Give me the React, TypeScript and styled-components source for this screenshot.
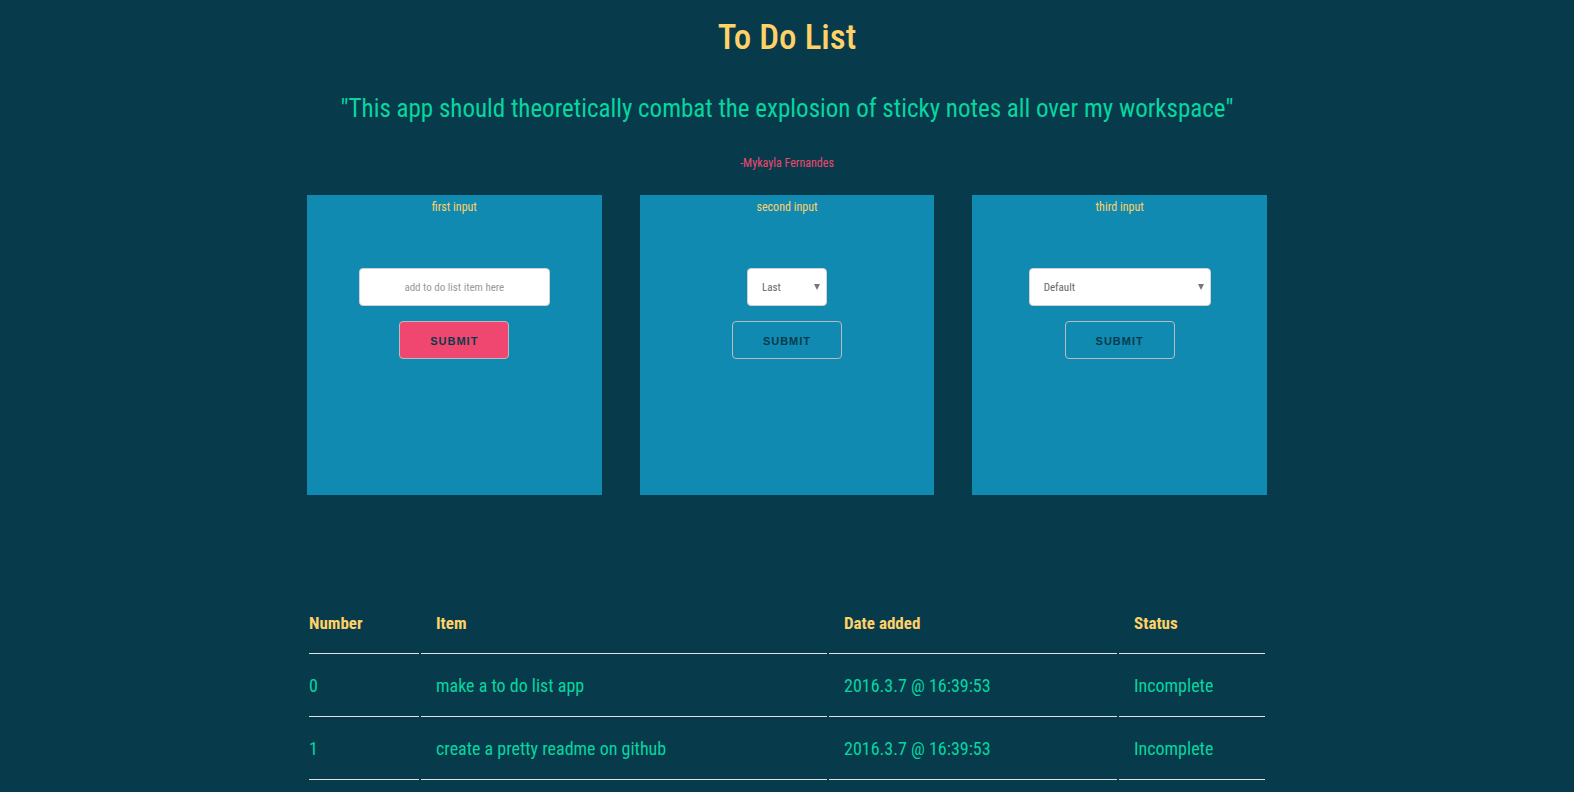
import React from 'react';
import styled, { createGlobalStyle } from 'styled-components';

const colors = {
  navy: '#073b4c',
  blue: '#118ab2',
  green: '#06d6a0',
  yellow: '#ffd166',
  pink: '#ef476f',
};

const condensed = '"Roboto Condensed", "Open Sans Condensed", "Liberation Sans", sans-serif';

const GlobalStyle = createGlobalStyle`
  *, *::before, *::after { box-sizing: border-box; }
  body {
    margin: 0;
    background: ${colors.navy};
    color: ${colors.green};
    font-family: ${condensed};
    font-size: 18px;
    line-height: 36px;
  }
`;

const Page = styled.main`
  width: 100%;
  max-width: 960px;
  margin: 0 auto;
`;

const Header = styled.header`
  display: flex;
  flex-direction: column;
  align-items: center;
  text-align: center;
`;

const Title = styled.h1`
  margin: 0;
  padding-top: 8px;
  color: ${colors.yellow};
  font-size: 35px;
  font-weight: 500;
  line-height: 60px;
`;

const Quote = styled.h2`
  margin: 0;
  padding-top: 16px;
  font-size: 25px;
  font-weight: 400;
  line-height: 50px;
`;

const Author = styled.p`
  margin: 0;
  padding: 17px 0 20px;
  color: ${colors.pink};
  font-size: 12px;
  line-height: 24px;
`;

const Cards = styled.div`
  display: grid;
  grid-template-columns: repeat(3, 1fr);
  gap: 38px;
`;

const Card = styled.form`
  display: flex;
  flex-direction: column;
  align-items: center;
  min-height: 300px;
  background: ${colors.blue};
`;

const CardLabel = styled.label`
  margin-bottom: 49px;
  color: ${colors.yellow};
  font-size: 12px;
  line-height: 24px;
`;

const TextField = styled.input`
  width: 191px;
  height: 38px;
  margin-bottom: 15px;
  padding: 6px 10px;
  border: 1px solid #d1d1d1;
  border-radius: 4px;
  background: #fff;
  color: #555;
  font-family: inherit;
  font-size: 11px;
  text-align: center;

  &::placeholder { color: #999; opacity: 1; }
`;

const SelectWrap = styled.div<{ $width: number }>`
  position: relative;
  width: ${(p) => p.$width}px;
  height: 38px;
  margin-bottom: 15px;
`;

const Select = styled.select`
  appearance: none;
  display: block;
  width: 100%;
  height: 100%;
  padding: 6px 14px;
  border: 1px solid #d1d1d1;
  border-radius: 4px;
  background: #fff;
  color: #666;
  font-family: inherit;
  font-size: 11px;
`;

const Arrow = styled.svg`
  position: absolute;
  top: 16px;
  right: 7px;
  width: 6px;
  height: 6px;
  fill: #777;
  pointer-events: none;
`;

const Submit = styled.button<{ $active?: boolean }>`
  width: 110px;
  height: 38px;
  padding: 2px 0 0;
  border: 1px solid #bbb;
  border-radius: 4px;
  background: ${(p) => (p.$active ? colors.pink : 'transparent')};
  color: ${colors.navy};
  font-family: "Liberation Sans", Arial, sans-serif;
  font-size: 11px;
  font-weight: 600;
  letter-spacing: 1px;
  text-transform: uppercase;
  cursor: pointer;
`;

const List = styled.table`
  width: 100%;
  margin-top: 96px;
  table-layout: fixed;
  border-collapse: separate;
  border-spacing: 2px;
`;

const Column = styled.col<{ $width?: number }>`
  width: ${(p) => (p.$width ? `${p.$width}px` : 'auto')};
`;

const Cell = styled.td`
  padding: 12px 15px;
  border-bottom: 1px solid #e1e1e1;
  text-align: left;

  &:first-child { padding-left: 0; }
`;

const HeadCell = styled(Cell)`
  color: ${colors.yellow};
  font-size: 17px;
  font-weight: 700;
`;

const items = ['make a to do list app', 'create a pretty readme on github'];

function Dropdown({ id, width, options }: { id: string; width: number; options: string[] }) {
  return (
    <SelectWrap $width={width}>
      <Select id={id}>
        {options.map((option) => (
          <option key={option}>{option}</option>
        ))}
      </Select>
      <Arrow viewBox="0 0 6 6" aria-hidden="true">
        <path d="M0 0H6L3 6Z" />
      </Arrow>
    </SelectWrap>
  );
}

export default function App() {
  return (
    <>
      <GlobalStyle />
      <Page>
        <Header>
          <Title>To Do List</Title>
          <Quote>
            "This app should theoretically combat the explosion of sticky notes all over my workspace"
          </Quote>
          <Author>-Mykayla Fernandes</Author>
        </Header>
        <Cards>
          <Card>
            <CardLabel htmlFor="new-item">first input</CardLabel>
            <TextField id="new-item" type="text" placeholder="add to do list item here" />
            <Submit type="button" $active>Submit</Submit>
          </Card>
          <Card>
            <CardLabel htmlFor="position">second input</CardLabel>
            <Dropdown id="position" width={80} options={['Last']} />
            <Submit type="button">Submit</Submit>
          </Card>
          <Card>
            <CardLabel htmlFor="category">third input</CardLabel>
            <Dropdown id="category" width={182} options={['Default']} />
            <Submit type="button">Submit</Submit>
          </Card>
        </Cards>
        <List>
          <colgroup>
            <Column $width={110} />
            <Column />
            <Column $width={288} />
            <Column $width={146} />
          </colgroup>
          <thead>
            <tr>
              <HeadCell as="th" scope="col">Number</HeadCell>
              <HeadCell as="th" scope="col">Item</HeadCell>
              <HeadCell as="th" scope="col">Date added</HeadCell>
              <HeadCell as="th" scope="col">Status</HeadCell>
            </tr>
          </thead>
          <tbody>
            {items.map((item, index) => (
              <tr key={item}>
                <Cell>{index}</Cell>
                <Cell>{item}</Cell>
                <Cell>2016.3.7 @ 16:39:53</Cell>
                <Cell>Incomplete</Cell>
              </tr>
            ))}
          </tbody>
        </List>
      </Page>
    </>
  );
}
